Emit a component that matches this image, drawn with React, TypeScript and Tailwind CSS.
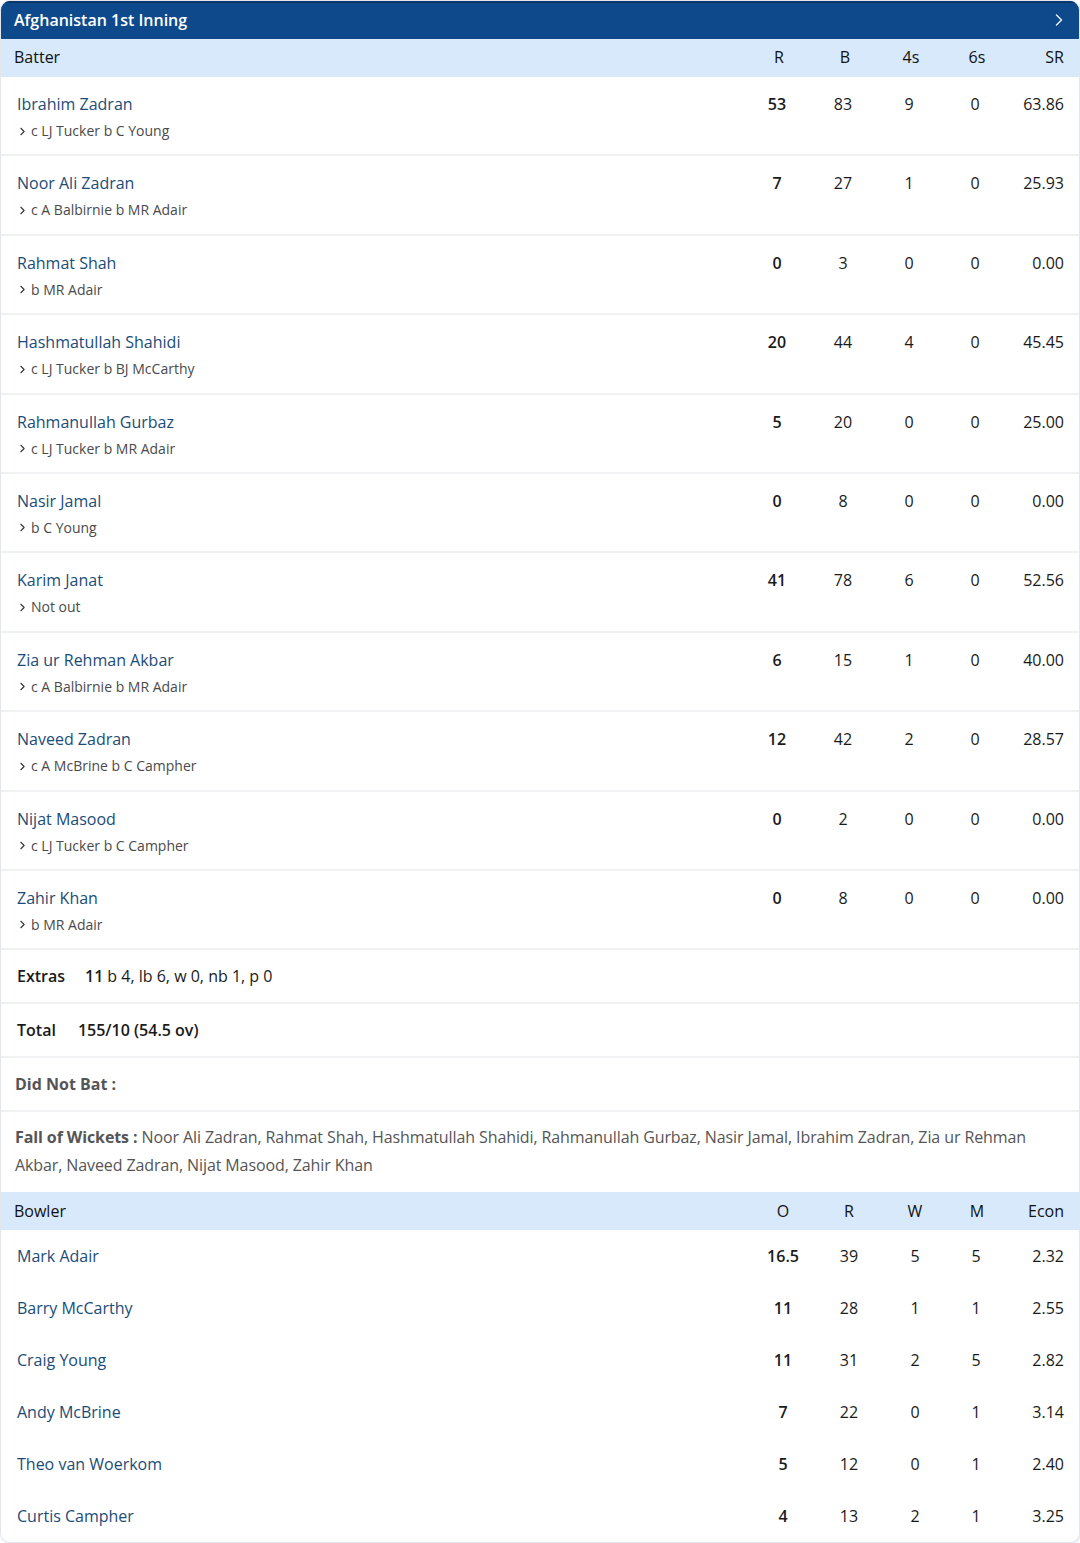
import React from 'react';
import { ChevronRight } from 'lucide-react';

type Batter = { name: string; out: string; r: string; b: string; f: string; s: string; sr: string };
type Bowler = { name: string; o: string; r: string; w: string; m: string; econ: string };

const batters: Batter[] = [
  { name: 'Ibrahim Zadran', out: 'c LJ Tucker b C Young', r: '53', b: '83', f: '9', s: '0', sr: '63.86' },
  { name: 'Noor Ali Zadran', out: 'c A Balbirnie b MR Adair', r: '7', b: '27', f: '1', s: '0', sr: '25.93' },
  { name: 'Rahmat Shah', out: 'b MR Adair', r: '0', b: '3', f: '0', s: '0', sr: '0.00' },
  { name: 'Hashmatullah Shahidi', out: 'c LJ Tucker b BJ McCarthy', r: '20', b: '44', f: '4', s: '0', sr: '45.45' },
  { name: 'Rahmanullah Gurbaz', out: 'c LJ Tucker b MR Adair', r: '5', b: '20', f: '0', s: '0', sr: '25.00' },
  { name: 'Nasir Jamal', out: 'b C Young', r: '0', b: '8', f: '0', s: '0', sr: '0.00' },
  { name: 'Karim Janat', out: 'Not out', r: '41', b: '78', f: '6', s: '0', sr: '52.56' },
  { name: 'Zia ur Rehman Akbar', out: 'c A Balbirnie b MR Adair', r: '6', b: '15', f: '1', s: '0', sr: '40.00' },
  { name: 'Naveed Zadran', out: 'c A McBrine b C Campher', r: '12', b: '42', f: '2', s: '0', sr: '28.57' },
  { name: 'Nijat Masood', out: 'c LJ Tucker b C Campher', r: '0', b: '2', f: '0', s: '0', sr: '0.00' },
  { name: 'Zahir Khan', out: 'b MR Adair', r: '0', b: '8', f: '0', s: '0', sr: '0.00' },
];

const bowlers: Bowler[] = [
  { name: 'Mark Adair', o: '16.5', r: '39', w: '5', m: '5', econ: '2.32' },
  { name: 'Barry McCarthy', o: '11', r: '28', w: '1', m: '1', econ: '2.55' },
  { name: 'Craig Young', o: '11', r: '31', w: '2', m: '5', econ: '2.82' },
  { name: 'Andy McBrine', o: '7', r: '22', w: '0', m: '1', econ: '3.14' },
  { name: 'Theo van Woerkom', o: '5', r: '12', w: '0', m: '1', econ: '2.40' },
  { name: 'Curtis Campher', o: '4', r: '13', w: '2', m: '1', econ: '3.25' },
];

export default function App() {
  return (
    <div className="bg-white w-[1080px] h-[1543px] overflow-hidden font-['Open_Sans',sans-serif] text-[16px]">
      <div className="rounded-[10px] border border-[#e3e6ea] overflow-hidden shadow-[1px_1px_3px_rgba(60,90,160,0.15)]">
        {/* title bar */}
        <div className="h-[38px] bg-[#0e4a8b] border-t-2 border-[#0a3568] flex items-center justify-between pl-[13px] pr-[10px] pb-[2px]">
          <span className="text-white font-semibold text-[16px]">Afghanistan 1st Inning</span>
          <ChevronRight className="w-5 h-5 text-white/90" strokeWidth={1.75} />
        </div>

        {/* batter header */}
        <div className="h-[38px] bg-[#d7e9fb] flex items-center pl-[13px] pr-[15px] pb-[2px] text-[#111]">
          <div className="flex-1">Batter</div>
          <div className="w-[66px] text-center pl-[4px]">R</div>
          <div className="w-[66px] text-center pl-[4px]">B</div>
          <div className="w-[66px] text-center pl-[4px]">4s</div>
          <div className="w-[66px] text-center pl-[4px]">6s</div>
          <div className="w-[56px] text-right">SR</div>
        </div>

        {batters.map((p) => (
          <div key={p.name} className="h-[79.4px] border-b-2 border-[#f0f1f3] flex pl-[16px] pr-[15px] pt-[15px] text-[#1a1a1a]">
            <div className="flex-1">
              <div className="text-[#1b4c78] leading-[24px]">{p.name}</div>
              <div className="flex items-center gap-[2px] mt-[5px] text-[14px] text-[#4a4a4a] leading-[20px]">
                <ChevronRight className="w-[13px] h-[13px] text-[#333] -ml-[1px]" strokeWidth={2} />
                <span>{p.out}</span>
              </div>
            </div>
            <div className="w-[66px] text-center font-semibold leading-[24px]">{p.r}</div>
            <div className="w-[66px] text-center leading-[24px]">{p.b}</div>
            <div className="w-[66px] text-center leading-[24px]">{p.f}</div>
            <div className="w-[66px] text-center leading-[24px]">{p.s}</div>
            <div className="w-[56px] text-right leading-[24px]">{p.sr}</div>
          </div>
        ))}

        <div className="h-[54px] border-b-2 border-[#f0f1f3] flex items-center pl-[16px] text-[#1a1a1a]">
          <span className="font-semibold">Extras</span>
          <span className="ml-[20px] font-semibold">11</span>
          <span className="ml-[4px]">b 4, lb 6, w 0, nb 1, p 0</span>
        </div>

        <div className="h-[54px] border-b-2 border-[#f0f1f3] flex items-center pl-[16px] text-[#1a1a1a]">
          <span className="font-semibold">Total</span>
          <span className="ml-[22px] font-semibold">155/10 (54.5 ov)</span>
        </div>

        <div className="h-[54px] border-b-2 border-[#f0f1f3] flex items-center pl-[14px] text-[#555] font-bold">
          Did Not Bat :
        </div>

        <div className="h-[80px] pl-[14px] pr-[30px] pt-[11px] text-[#555] leading-[28px] tracking-[-0.1px]">
          <span className="font-bold">Fall of Wickets :</span>{' '}
          <span>Noor Ali Zadran, Rahmat Shah, Hashmatullah Shahidi, Rahmanullah Gurbaz, Nasir Jamal, Ibrahim Zadran, Zia ur Rehman Akbar, Naveed Zadran, Nijat Masood, Zahir Khan</span>
        </div>

        {/* bowler header */}
        <div className="h-[38px] bg-[#d7e9fb] flex items-center pl-[13px] pr-[15px] pb-[1px] text-[#111]">
          <div className="flex-1">Bowler</div>
          <div className="w-[66px] text-center">O</div>
          <div className="w-[66px] text-center">R</div>
          <div className="w-[66px] text-center">W</div>
          <div className="w-[56px] text-center pl-[2px]">M</div>
          <div className="w-[60px] text-right">Econ</div>
        </div>

        {bowlers.map((b) => (
          <div key={b.name} className="h-[52px] flex items-center pl-[16px] pr-[15px] text-[#1a1a1a]">
            <div className="flex-1 text-[#1b4c78]">{b.name}</div>
            <div className="w-[66px] text-center font-semibold">{b.o}</div>
            <div className="w-[66px] text-center">{b.r}</div>
            <div className="w-[66px] text-center">{b.w}</div>
            <div className="w-[56px] text-center">{b.m}</div>
            <div className="w-[60px] text-right">{b.econ}</div>
          </div>
        ))}
      </div>
    </div>
  );
}
